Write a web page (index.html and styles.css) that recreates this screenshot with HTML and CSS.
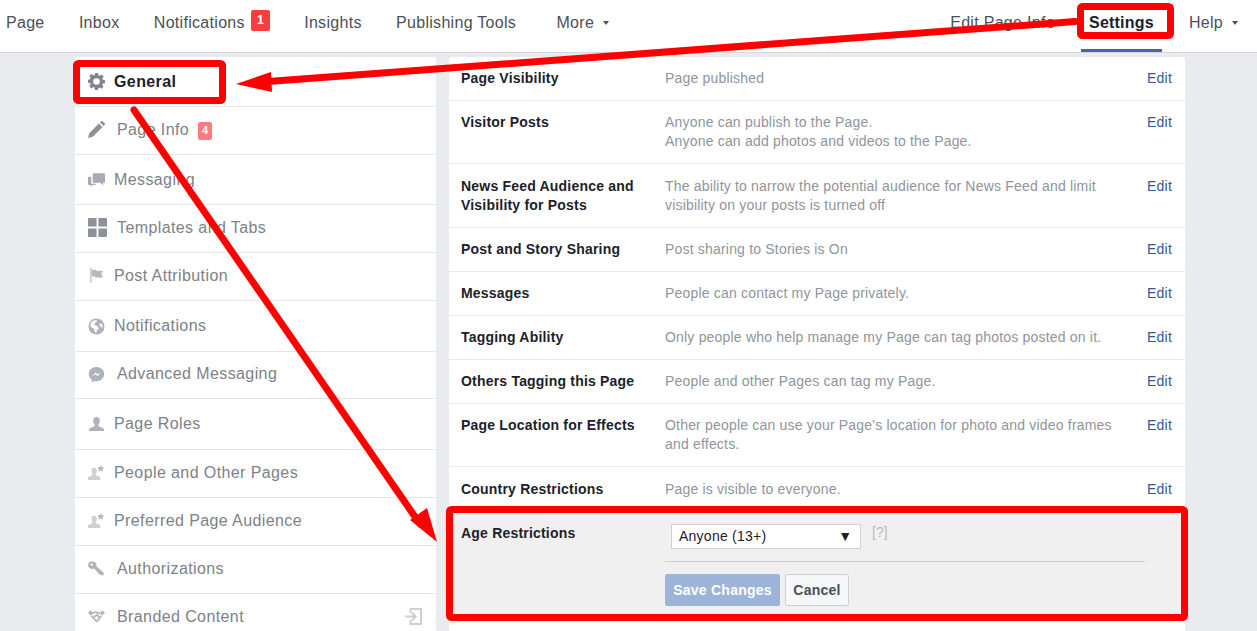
FILE: index.html
```html
<!DOCTYPE html>
<html lang="en">
<head>
<meta charset="utf-8">
<title>Page Settings</title>
<link rel="stylesheet" href="styles.css">
</head>
<body>
<header class="topbar">
  <nav class="nav-left">
    <a class="nav-item">Page</a>
    <a class="nav-item">Inbox</a>
    <a class="nav-item">Notifications<span class="nav-badge">1</span></a>
    <a class="nav-item">Insights</a>
    <a class="nav-item">Publishing Tools</a>
    <a class="nav-item nav-more">More<i class="caret"></i></a>
  </nav>
  <nav class="nav-right">
    <a class="nav-item">Edit Page Info</a>
    <a class="nav-item nav-active">Settings</a>
    <a class="nav-item nav-help">Help<i class="caret"></i></a>
  </nav>
</header>

<main class="layout">
  <aside class="sidebar">
    <div class="side-row h50 low active">
      <svg class="ico" viewBox="0 0 18 18"><path fill="#7f8590" fill-rule="evenodd" d="M7.4 0h3.2l.4 2.4 1.4.6 2-1.4 2.2 2.2-1.4 2 .6 1.4 2.2.4v3.2l-2.3.4-.6 1.4 1.4 2-2.2 2.2-2-1.4-1.3.6-.4 2.4H7.4L7 15.500l-1.400-.6-2 1.400-2.200-2.200 1.400-2-.6-1.400L0 10.300V7.100l2.200-.4.6-1.400-1.400-2 2.200-2.200 2 1.400L7 2.400zM9 5.500a3.500 3.500 0 1 0 0 7 3.500 3.500 0 0 0 0-7z"/></svg>
      <span class="side-label">General</span>
    </div>
    <div class="side-row h48 wide">
      <svg class="ico" viewBox="0 0 18 18"><path fill="#8d9199" d="M0 18l1.200-5L11.500 2.700l3.800 3.800L5 16.800zM12.700 1.500l1-1a1.500 1.500 0 0 1 2.100 0l1.700 1.700a1.500 1.500 0 0 1 0 2.100l-1 1z"/></svg>
      <span class="side-label">Page Info</span><span class="side-badge">4</span>
    </div>
    <div class="side-row h50 low">
      <svg class="ico" viewBox="0 0 18 18"><path fill="#a6aab2" d="M6 2.500h11a1 1 0 0 1 1 1v8a1 1 0 0 1-1 1h-1v2.500l-3-2.500H6a1 1 0 0 1-1-1v-8a1 1 0 0 1 1-1zM3.500 6v7.500H9l-1.500 1.200H4.500L2.500 17v-2.300H1a1 1 0 0 1-1-1V7a1 1 0 0 1 1-1z"/></svg>
      <span class="side-label">Messaging</span>
    </div>
    <div class="side-row h48 wide">
      <svg class="ico ico-lg" viewBox="0 0 20 20"><path fill="#8d9199" d="M1 0h8v9H0V1a1 1 0 0 1 1-1zm10 0h8a1 1 0 0 1 1 1v8h-9zM0 11h9v9H1a1 1 0 0 1-1-1zm11 0h9v8a1 1 0 0 1-1 1h-8z"/></svg>
      <span class="side-label">Templates and Tabs</span>
    </div>
    <div class="side-row h48">
      <svg class="ico" viewBox="0 0 18 18"><path fill="#ccd0d5" d="M2 1h2v16H2z"/><path fill="#b4b8bf" d="M4 3h4l1 1h7l-2 3.500 2 3.500H8l-1-1H4z"/></svg>
      <span class="side-label">Post Attribution</span>
    </div>
    <div class="side-row h51 low">
      <svg class="ico" viewBox="0 0 18 18"><path fill="#aeb2ba" fill-rule="evenodd" d="M9 .5a8.500 8.500 0 1 1 0 17 8.500 8.500 0 0 1 0-17zM4 4C2.500 6 2 8 3 9.500l3 1.500 1 3 1.500 2 1-3 2-2-1.500-2.500-3-.5V5l2.500-1L9 2.500C7 2.500 5.500 3 4 4zm9.500 1.500L12 6.500l1 2.500 2.500 1c.3-2-.5-3.500-2-4.500z"/></svg>
      <span class="side-label">Notifications</span>
    </div>
    <div class="side-row h47 wide">
      <svg class="ico" viewBox="0 0 18 18"><path fill="#aeb2ba" d="M9 1c4.600 0 8.200 3.300 8.200 7.600S13.600 16.200 9 16.200c-.8 0-1.600-.1-2.300-.3L4 17.500v-2.900C2 13.200.8 11 .8 8.600.8 4.300 4.400 1 9 1z"/><path fill="#fff" d="M4.500 10.800l3.300-4 2.200 2 3.500-2-3.300 4-2.200-2z"/></svg>
      <span class="side-label">Advanced Messaging</span>
    </div>
    <div class="side-row h51 low">
      <svg class="ico" viewBox="0 0 18 18"><path fill="#aeb2ba" d="M9 1c2.200 0 3.500 1.600 3.500 4 0 1.700-.7 3.200-1.500 4v1.500l5 2.500c.6.300 1 .8 1 1.500V16H1v-1.500c0-.7.400-1.200 1-1.500l5-2.500V9c-.8-.8-1.500-2.300-1.500-4C5.500 2.600 6.800 1 9 1z"/></svg>
      <span class="side-label">Page Roles</span>
    </div>
    <div class="side-row h48">
      <svg class="ico" viewBox="0 0 18 18"><path fill="#ccd0d5" d="M6.500 4c1.800 0 2.800 1.300 2.800 3.200 0 1.300-.5 2.500-1.200 3.200v1.200l3.900 2c.6.300 1 .8 1 1.400V17H0v-2c0-.6.300-1.100 1-1.400l3.900-2v-1.200C4.200 9.700 3.700 8.500 3.700 7.200 3.700 5.300 4.700 4 6.500 4z"/><path fill="#b4b8bf" d="M13.500 1l1.100 2.500 2.700.3-2 1.800.6 2.700-2.400-1.400-2.400 1.400.6-2.700-2-1.800 2.700-.3z"/></svg>
      <span class="side-label">People and Other Pages</span>
    </div>
    <div class="side-row h48">
      <svg class="ico" viewBox="0 0 18 18"><path fill="#ccd0d5" d="M6.500 4c1.800 0 2.800 1.300 2.800 3.200 0 1.300-.5 2.500-1.200 3.200v1.200l3.900 2c.6.300 1 .8 1 1.400V17H0v-2c0-.6.300-1.100 1-1.400l3.900-2v-1.200C4.200 9.700 3.700 8.500 3.700 7.200 3.700 5.300 4.700 4 6.500 4z"/><path fill="#b4b8bf" d="M13.500 1l1.100 2.500 2.700.3-2 1.800.6 2.700-2.400-1.400-2.400 1.400.6-2.700-2-1.800 2.700-.3z"/></svg>
      <span class="side-label">Preferred Page Audience</span>
    </div>
    <div class="side-row h48 wide">
      <svg class="ico" viewBox="0 0 18 18"><path fill="#aeb2ba" fill-rule="evenodd" d="M5 1.500a4 4 0 0 1 3.800 5.200l7.700 6.500v3h-3l-1.500-1.700-1 .2-.2-1.500-1.500-.2-.2-1.500-3 -2.600A4 4 0 1 1 5 1.500zM4 3.800a1.200 1.200 0 1 0 0 2.400 1.200 1.200 0 0 0 0-2.400z"/></svg>
      <span class="side-label">Authorizations</span>
    </div>
    <div class="side-row h48 wide">
      <svg class="ico" viewBox="0 0 18 18"><path fill="#aeb2ba" d="M0 5l3-2.500 2 3L3 8zm18 0l-3-2.500-2 3L15 8z"/><path fill="none" stroke="#aeb2ba" stroke-width="1.800" d="M4.500 5.500L7 4.500h2l4 1.500M3.500 8l5.500 6 1.500-.7 3.500-5.300M6.500 9.500L9.500 7l2.500 3"/></svg>
      <span class="side-label">Branded Content</span>
      <svg class="ico-exit" viewBox="0 0 17 17"><path fill="none" stroke="#ccd0d5" stroke-width="2" d="M5.500 5V1h10.500v15H5.500v-4"/><path fill="none" stroke="#ccd0d5" stroke-width="2" d="M0 8.500h10M7 4.800l3.700 3.700L7 12.200"/></svg>
    </div>
  </aside>

  <section class="panel">
    <div class="set-row">
      <div class="set-name">Page Visibility</div>
      <div class="set-desc">Page published</div>
      <a class="set-edit">Edit</a>
    </div>
    <div class="set-row">
      <div class="set-name">Visitor Posts</div>
      <div class="set-desc">Anyone can publish to the Page.<br>Anyone can add photos and videos to the Page.</div>
      <a class="set-edit">Edit</a>
    </div>
    <div class="set-row pad-top">
      <div class="set-name">News Feed Audience and Visibility for Posts</div>
      <div class="set-desc">The ability to narrow the potential audience for News Feed and limit visibility on your posts is turned off</div>
      <a class="set-edit">Edit</a>
    </div>
    <div class="set-row">
      <div class="set-name">Post and Story Sharing</div>
      <div class="set-desc">Post sharing to Stories is On</div>
      <a class="set-edit">Edit</a>
    </div>
    <div class="set-row">
      <div class="set-name">Messages</div>
      <div class="set-desc">People can contact my Page privately.</div>
      <a class="set-edit">Edit</a>
    </div>
    <div class="set-row">
      <div class="set-name">Tagging Ability</div>
      <div class="set-desc">Only people who help manage my Page can tag photos posted on it.</div>
      <a class="set-edit">Edit</a>
    </div>
    <div class="set-row">
      <div class="set-name">Others Tagging this Page</div>
      <div class="set-desc">People and other Pages can tag my Page.</div>
      <a class="set-edit">Edit</a>
    </div>
    <div class="set-row">
      <div class="set-name">Page Location for Effects</div>
      <div class="set-desc">Other people can use your Page's location for photo and video frames and effects.</div>
      <a class="set-edit">Edit</a>
    </div>
    <div class="set-row pad-top">
      <div class="set-name">Country Restrictions</div>
      <div class="set-desc">Page is visible to everyone.</div>
      <a class="set-edit">Edit</a>
    </div>
    <div class="age-row">
      <div class="set-name">Age Restrictions</div>
      <div class="age-body">
        <div class="age-control">
          <div class="fake-select"><span>Anyone (13+)</span><span class="select-arrow">▼</span></div>
          <span class="help-link">[?]</span>
        </div>
        <div class="age-actions">
          <button class="btn btn-save">Save Changes</button>
          <button class="btn btn-cancel">Cancel</button>
        </div>
      </div>
    </div>
  </section>
</main>

<svg class="annotations" viewBox="0 0 1257 631" width="1257" height="631">
  <rect class="mark" x="76.500" y="63.500" width="146" height="37" rx="2"/>
  <rect class="mark" x="1080.500" y="6.500" width="90" height="29" rx="2"/>
  <rect class="mark" x="449.500" y="509.500" width="735" height="108" rx="2"/>
  <path class="shaft" d="M1075 21.500L268 81.500"/>
  <path class="head" d="M236 84L271 72L272 92z"/>
  <path class="shaft" d="M134 110L420 524"/>
  <path class="head" d="M437 542L410 520L427 508z"/>
</svg>
</body>
</html>
```
FILE: styles.css
```css
* { box-sizing: border-box; }
html, body { margin: 0; height: 631px; overflow: hidden; }
body {
  position: relative;
  background: #e9ebee;
  font-family: "Liberation Sans", Arial, sans-serif;
  color: #1d2129;
}
.topbar {
  height: 53px;
  background: #fff;
  border-bottom: 1px solid #d3d6db;
  display: flex;
  justify-content: space-between;
  padding: 0 19px 0 6px;
}
.nav-left, .nav-right { display: flex; }
.nav-left { gap: 34.300px; }
.nav-item {
  display: flex;
  align-items: flex-start;
  padding-top: 13px;
  font-size: 16px;
  line-height: 19px;
  letter-spacing: .3px;
  color: #4b4f56;
  white-space: nowrap;
}
.nav-more { margin-left: 6px; }
.nav-active {
  font-weight: 700;
  color: #1d2129;
  letter-spacing: .2px;
  margin-left: 26px;
  width: 81px;
  justify-content: center;
  height: 52px;
  border-bottom: 3px solid #4267b2;
}
.nav-help { margin-left: 27px; }
.nav-badge {
  margin-left: 6px;
  margin-top: -3px;
  width: 19px;
  height: 21px;
  background: #fa3e3e;
  border-radius: 2px;
  color: #fff;
  font-size: 13px;
  font-weight: 700;
  line-height: 19px;
  letter-spacing: 0;
  text-align: center;
}
.caret {
  width: 0;
  height: 0;
  margin: 8px 0 0 9px;
  border-left: 3px solid transparent;
  border-right: 3px solid transparent;
  border-top: 4px solid #4b4f56;
}
.layout {
  display: flex;
  align-items: flex-start;
  gap: 13px;
  padding: 4px 0 0 75px;
}
.sidebar {
  width: 361px;
  background: #fff;
  border-radius: 3px 3px 0 0;
  overflow: hidden;
}
.side-row {
  display: flex;
  align-items: center;
  padding: 0 14px 2px 13px;
  border-bottom: 1px solid #e3e5e8;
  font-size: 16px;
  letter-spacing: .4px;
  color: #7d8188;
}
.low { padding-bottom: 0; }
.h47 { height: 47px; }
.h48 { height: 48px; }
.h50 { height: 50px; }
.h51 { height: 51px; }
.ico { width: 17px; height: 17px; margin-right: 9px; flex: none; }
.wide .ico { margin-right: 12px; }
.ico-lg { width: 19px; height: 19px; }
.wide .ico-lg { margin-right: 10px; }
.active { color: #1d2129; font-weight: 700; }
.side-badge {
  margin-left: 9px;
  margin-top: 3px;
  width: 14px;
  height: 18px;
  background: #fd7b7f;
  border-radius: 2px;
  color: #fff;
  font-size: 11px;
  font-weight: 700;
  line-height: 17px;
  letter-spacing: 0;
  text-align: center;
}
.wide .ico-exit { width: 17px; height: 17px; margin-left: auto; margin-right: 0; }
.panel {
  width: 736px;
  height: 600px;
  background: #fff;
  border-radius: 3px 3px 0 0;
  font-size: 14px;
  line-height: 19px;
}
.set-row {
  display: flex;
  padding: 12px 13px 12px 12px;
  border-bottom: 1px solid #e9ebee;
}
.pad-top { padding-top: 13px; }
.set-name {
  width: 204px;
  flex: none;
  padding-right: 20px;
  font-weight: 700;
  letter-spacing: .2px;
  color: #1d2129;
}
.set-desc { flex: 1; color: #90949c; padding-right: 30px; letter-spacing: .19px; }
.set-edit { color: #365899; letter-spacing: .2px; }
.age-row {
  display: flex;
  height: 105px;
  padding: 12px 40px 0 12px;
  background: #f0f0f1;
}
.age-body { flex: 1; }
.age-control {
  display: flex;
  height: 38px;
  padding-left: 6px;
  border-bottom: 1px solid #ccc;
}
.fake-select {
  width: 190px;
  height: 25px;
  display: flex;
  justify-content: space-between;
  align-items: center;
  padding: 0 8px 0 7px;
  background: #fff;
  border: 1px solid #ccd0d5;
  color: #1d2129;
  letter-spacing: .25px;
}
.select-arrow { font-size: 14px; letter-spacing: 0; }
.help-link { margin-left: 11px; color: #bbb; font-size: 14px; line-height: 17px; }
.age-actions { display: flex; gap: 5px; margin-top: 12px; }
.btn {
  height: 32px;
  padding: 0;
  border-radius: 2px;
  font-family: inherit;
  font-size: 14px;
  font-weight: 700;
  letter-spacing: .25px;
}
.btn-save {
  width: 115px;
  background: #9cb4d8;
  border: 1px solid #9cb4d8;
  color: #fff;
}
.btn-cancel {
  width: 64px;
  background: #f6f7f9;
  border: 1px solid #ced0d4;
  color: #4b4f56;
}
.annotations { position: absolute; left: 0; top: 0; pointer-events: none; }
.mark { fill: none; stroke: #f00; stroke-width: 7; }
.shaft { fill: none; stroke: #f00; stroke-width: 7; stroke-linecap: round; }
.head { fill: #f00; }
```
